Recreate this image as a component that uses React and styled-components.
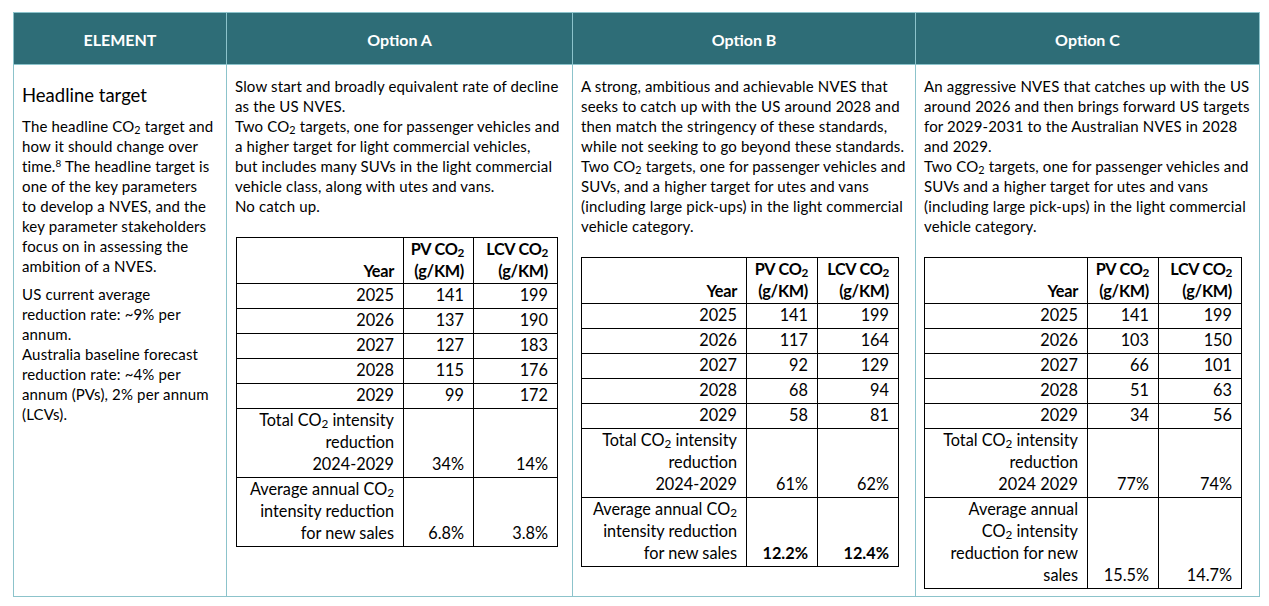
import React from 'react'
import styled, { createGlobalStyle } from 'styled-components'

const GlobalStyle = createGlobalStyle`
    body {
        margin: 0;
        background: #ffffff;
        font-family: Lato, "Open Sans", sans-serif;
        color: #000000;
    }
`;

function Co2() {
    return (
        <>
            CO<Sub>2</Sub>
        </>
    );
}

function Note({ n }) {
    return <Sup>{n}</Sup>;
}

const options = [
    {
        title: 'Option A',
        lines: [
            'Slow start and broadly equivalent rate of decline',
            'as the US NVES.',
            <>Two <Co2 /> targets, one for passenger vehicles and</>,
            'a higher target for light commercial vehicles,',
            'but includes many SUVs in the light commercial',
            'vehicle class, along with utes and vans.',
            'No catch up.',
        ],
        cols: [167, 70, 84],
        indent: 9,
        rows: [
            ['2025', '141', '199'],
            ['2026', '137', '190'],
            ['2027', '127', '183'],
            ['2028', '115', '176'],
            ['2029', '99', '172'],
        ],
        total: [['reduction', '2024-2029'], '34%', '14%'],
        average: [[<>Average annual <Co2 /></>, 'intensity reduction', 'for new sales'], '6.8%', '3.8%'],
        boldAverage: false,
    },
    {
        title: 'Option B',
        lines: [
            'A strong, ambitious and achievable NVES that',
            'seeks to catch up with the US around 2028 and',
            'then match the stringency of these standards,',
            'while not seeking to go beyond these standards.',
            <>Two <Co2 /> targets, one for passenger vehicles and</>,
            'SUVs, and a higher target for utes and vans',
            '(including large pick-ups) in the light commercial',
            'vehicle category.',
        ],
        cols: [165, 71, 81],
        indent: 8,
        rows: [
            ['2025', '141', '199'],
            ['2026', '117', '164'],
            ['2027', '92', '129'],
            ['2028', '68', '94'],
            ['2029', '58', '81'],
        ],
        total: [['reduction', '2024-2029'], '61%', '62%'],
        average: [[<>Average annual <Co2 /></>, 'intensity reduction', 'for new sales'], '12.2%', '12.4%'],
        boldAverage: true,
    },
    {
        title: 'Option C',
        lines: [
            'An aggressive NVES that catches up with the US',
            'around 2026 and then brings forward US targets',
            'for 2029-2031 to the Australian NVES in 2028',
            'and 2029.',
            <>Two <Co2 /> targets, one for passenger vehicles and</>,
            'SUVs and a higher target for utes and vans',
            '(including large pick-ups) in the light commercial',
            'vehicle category.',
        ],
        cols: [163, 71, 83],
        indent: 8,
        rows: [
            ['2025', '141', '199'],
            ['2026', '103', '150'],
            ['2027', '66', '101'],
            ['2028', '51', '63'],
            ['2029', '34', '56'],
        ],
        total: [['reduction', '2024 2029'], '77%', '74%'],
        average: [['Average annual', <><Co2 /> intensity</>, 'reduction for new', 'sales'], '15.5%', '14.7%'],
        boldAverage: false,
    },
];

const elementLines = [
    <>The headline <Co2 /> target and</>,
    'how it should change over',
    <>time.<Note n="8" /> The headline target is</>,
    'one of the key parameters',
    'to develop a NVES, and the',
    'key parameter stakeholders',
    'focus on in assessing the',
    'ambition of a NVES.',
];

const rateLines = [
    'US current average',
    'reduction rate: ~9% per',
    'annum.',
    'Australia baseline forecast',
    'reduction rate: ~4% per',
    'annum (PVs), 2% per annum',
    '(LCVs).',
];

function Lines({ items }) {
    return items.map((item, i) => <Line key={i}>{item}</Line>);
}

function TargetTable({ option }) {
    const [labelTotal, pvTotal, lcvTotal] = option.total;
    const [labelAvg, pvAvg, lcvAvg] = option.average;
    return (
        <Table $indent={option.indent}>
            <colgroup>
                {option.cols.map((w, i) => (
                    <col key={i} style={{ width: w }} />
                ))}
            </colgroup>
            <tbody>
                <tr>
                    <HeadCell>Year</HeadCell>
                    <HeadCell>
                        <Line>PV <Co2 /></Line>
                        <Line>(g/KM)</Line>
                    </HeadCell>
                    <HeadCell>
                        <Line>LCV <Co2 /></Line>
                        <Line>(g/KM)</Line>
                    </HeadCell>
                </tr>
                {option.rows.map((row) => (
                    <tr key={row[0]}>
                        {row.map((v, i) => (
                            <Cell key={i}>{v}</Cell>
                        ))}
                    </tr>
                ))}
                <tr>
                    <Cell>
                        <Line>Total <Co2 /> intensity</Line>
                        <Lines items={labelTotal} />
                    </Cell>
                    <Cell>{pvTotal}</Cell>
                    <Cell>{lcvTotal}</Cell>
                </tr>
                <tr>
                    <Cell>
                        <Lines items={labelAvg} />
                    </Cell>
                    <Cell $bold={option.boldAverage}>{pvAvg}</Cell>
                    <Cell $bold={option.boldAverage}>{lcvAvg}</Cell>
                </tr>
            </tbody>
        </Table>
    );
}

export default function App() {
    return (
        <>
            <GlobalStyle />
            <Page>
                <Grid>
                    <HeaderCell>ELEMENT</HeaderCell>
                    {options.map((o) => (
                        <HeaderCell key={o.title}>{o.title}</HeaderCell>
                    ))}
                    <ElementCell>
                        <Title>Headline target</Title>
                        <Para>
                            <Lines items={elementLines} />
                        </Para>
                        <Para>
                            <Lines items={rateLines} />
                        </Para>
                    </ElementCell>
                    {options.map((o) => (
                        <OptionCell key={o.title}>
                            <Para>
                                <Lines items={o.lines} />
                            </Para>
                            <TargetTable option={o} />
                        </OptionCell>
                    ))}
                </Grid>
            </Page>
        </>
    );
}

const Page = styled.div`
    padding: 12px 0 0 13px;
`;

const Grid = styled.div`
    display: grid;
    grid-template-columns: 213px 346px 343px 344px;
    grid-template-rows: 52px 532px;
    width: 1247px;
    box-sizing: border-box;
    border-left: 1px solid #8cc3cb;
    border-top: 1px solid #8cc3cb;
`;

const HeaderCell = styled.div`
    box-sizing: border-box;
    background: #2e6d77;
    color: #ffffff;
    font-weight: 700;
    font-size: 16px;
    display: flex;
    align-items: center;
    justify-content: center;
    padding-top: 2px;
    border-right: 1px solid #8cc3cb;
    border-bottom: 1px solid #8cc3cb;
`;

const BodyCell = styled.div`
    box-sizing: border-box;
    border-right: 1px solid #8cc3cb;
    border-bottom: 1px solid #8cc3cb;
    font-size: 15px;
    letter-spacing: 0.15px;
    line-height: 20px;
`;

const ElementCell = styled(BodyCell)`
    padding: 18px 4px 0 8px;
    display: flex;
    flex-direction: column;
    gap: 8px;
`;

const OptionCell = styled(BodyCell)`
    padding: 11px 2px 0 8px;
    display: flex;
    flex-direction: column;
    gap: 21px;
`;

const Title = styled.div`
    font-size: 18.5px;
    letter-spacing: 0;
    line-height: 24px;
    margin-bottom: 1px;
`;

const Para = styled.div`
    white-space: nowrap;
`;

const Line = styled.div`
    white-space: nowrap;
`;

const Sub = styled.span`
    font-size: 0.72em;
    vertical-align: -0.18em;
    line-height: 0;
`;

const Sup = styled.span`
    font-size: 0.66em;
    vertical-align: 0.5em;
    line-height: 0;
`;

const Table = styled.table`
    border-collapse: collapse;
    table-layout: fixed;
    width: max-content;
    margin-left: ${(p) => p.$indent - 8}px;
    font-size: 16.3px;
    letter-spacing: 0;
    line-height: 22px;
`;

const Cell = styled.td`
    border: 1px solid #000000;
    padding: 0 9px 2px 4px;
    text-align: right;
    vertical-align: bottom;
    white-space: nowrap;
    font-weight: ${(p) => (p.$bold ? 700 : 400)};
`;

const HeadCell = styled(Cell)`
    font-weight: 700;
    padding-bottom: 1px;
    letter-spacing: -0.3px;
`;
